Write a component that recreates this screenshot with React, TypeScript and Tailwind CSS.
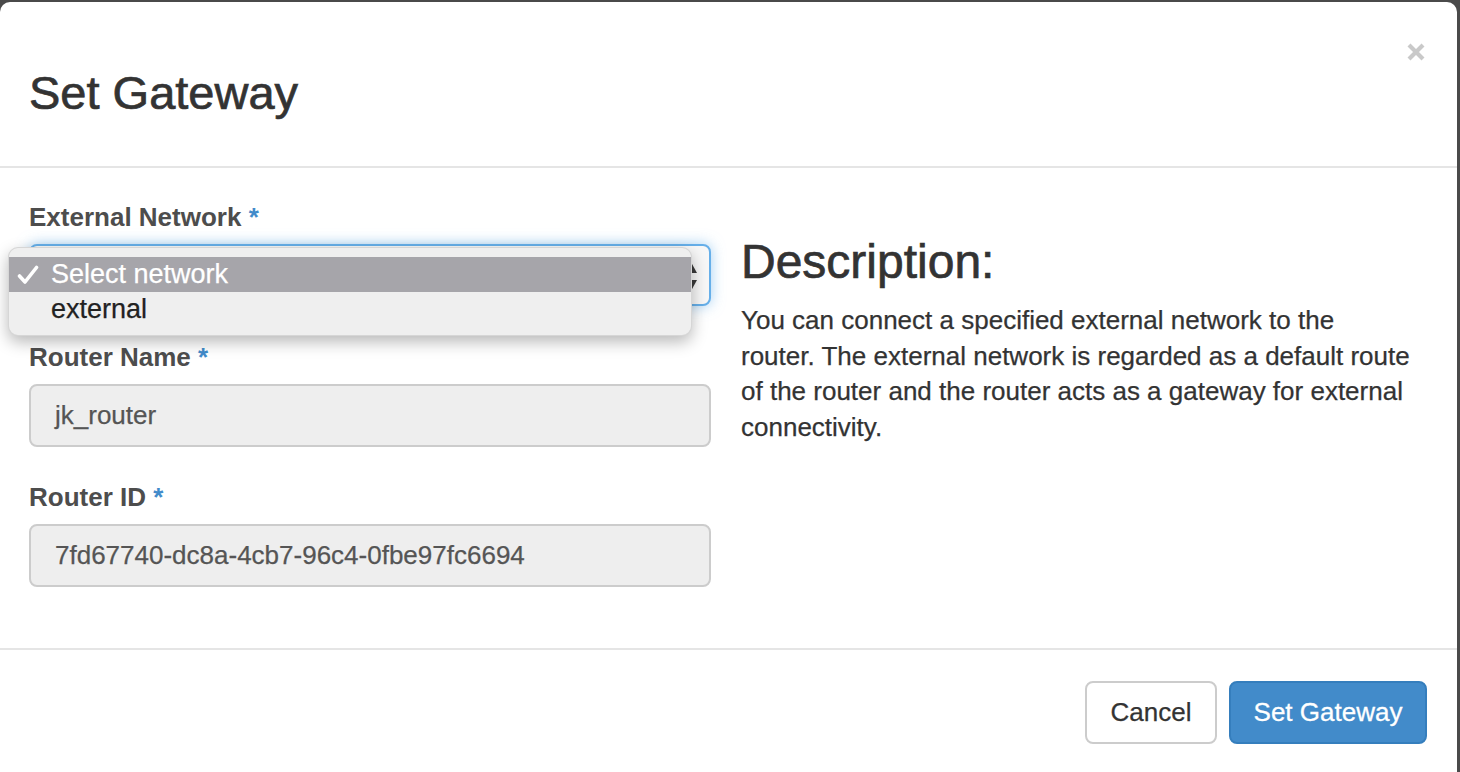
import React from 'react';

const Req = () => <span className="text-[#428bca]"> *</span>;

export default function App() {
  return (
    <div className="w-[1460px] h-[772px] overflow-hidden bg-[#4a4a4a] pt-[2px] pr-[3px]">
      <div className="h-[780px] rounded-[10px] bg-white flex flex-col font-['Liberation_Sans',Arial,sans-serif]">
        {/* Header */}
        <div className="relative h-[166px] shrink-0 border-b-2 border-[#e5e5e5] pl-[29px] pt-[67px]">
          <h3 className="text-[47px] leading-[48px] text-[#333] [-webkit-text-stroke:0.7px_#333]">Set Gateway</h3>
          <button className="absolute right-[32px] top-[41px] w-[18px] h-[18px]">
            <svg width="18" height="18" viewBox="0 0 18 18">
              <path d="M2 2L16 16M16 2L2 16" stroke="#c9c9c9" strokeWidth="4.2" />
            </svg>
          </button>
        </div>

        {/* Body */}
        <div className="h-[480px] shrink-0 flex px-[29px] pt-[31px]">
          <div className="w-[682px] shrink-0">
            <div className="mb-[33px]">
              <label className="block text-[26px] leading-[37px] font-bold text-[#4d4d4d] mb-[8px]">
                External Network<Req />
              </label>
              <div className="relative h-[62px] rounded-[8px] border-2 border-[#66afe9] bg-[#f7f7f7] shadow-[0_0_14px_rgba(102,175,233,0.6)]">
                <svg className="absolute right-[12px] top-[17px]" width="11" height="27" viewBox="0 0 11 27">
                  <path d="M5.5 0L11 10H0Z" fill="#3a3a3a" />
                  <path d="M0 17H11L5.5 27Z" fill="#3a3a3a" />
                </svg>
                {/* open dropdown list */}
                <div className="absolute left-[-23px] top-[1px] w-[684px] rounded-[10px] bg-[#efefef] border border-black/10 shadow-[0_6px_16px_rgba(0,0,0,0.28)] py-[9px] text-[27px] [-webkit-text-stroke:0.25px]">
                  <div className="relative h-[35px] leading-[35px] bg-[#a6a5aa] text-white pl-[42px]">
                    <svg className="absolute left-[8px] top-[8px]" width="22" height="20" viewBox="0 0 22 20">
                      <path d="M2.5 11L8 17L19.5 2.5" fill="none" stroke="#fff" strokeWidth="3.6" strokeLinecap="round" strokeLinejoin="round" />
                    </svg>
                    Select network
                  </div>
                  <div className="h-[34px] leading-[34px] text-[#222] pl-[42px]">external</div>
                </div>
              </div>
            </div>

            <div className="mb-[32px]">
              <label className="block text-[26px] leading-[37px] font-bold text-[#4d4d4d] mb-[8px]">
                Router Name<Req />
              </label>
              <div className="h-[63px] rounded-[8px] border-2 border-[#cccccc] bg-[#eeeeee] px-[24px] flex items-center text-[26px] text-[#555] [-webkit-text-stroke:0.25px_#555]">
                jk_router
              </div>
            </div>

            <div>
              <label className="block text-[26px] leading-[37px] font-bold text-[#4d4d4d] mb-[8px]">
                Router ID<Req />
              </label>
              <div className="h-[63px] rounded-[8px] border-2 border-[#cccccc] bg-[#eeeeee] px-[24px] flex items-center text-[26px] text-[#555] [-webkit-text-stroke:0.25px_#555]">
                7fd67740-dc8a-4cb7-96c4-0fbe97fc6694
              </div>
            </div>
          </div>

          <div className="ml-[30px] w-[686px] shrink-0">
            <h3 className="mt-[37px] text-[48px] leading-[52px] text-[#333] [-webkit-text-stroke:0.7px_#333]">Description:</h3>
            <p className="mt-[15px] text-[26px] leading-[35.7px] text-[#333] [-webkit-text-stroke:0.25px_#333]">
              You can connect a specified external network to the
              <br />
              router. The external network is regarded as a default route
              <br />
              of the router and the router acts as a gateway for external
              <br />
              connectivity.
            </p>
          </div>
        </div>

        {/* Footer */}
        <div className="border-t-2 border-[#e5e5e5] flex justify-end gap-[12px] pt-[31px] pr-[30px]">
          <button className="w-[132px] h-[63px] rounded-[8px] border-2 border-[#cccccc] bg-white text-[26px] text-[#333] [-webkit-text-stroke:0.25px_#333]">
            Cancel
          </button>
          <button className="w-[198px] h-[63px] rounded-[8px] border-2 border-[#357ebd] bg-[#428bca] text-[26px] text-white [-webkit-text-stroke:0.3px_#fff]">
            Set Gateway
          </button>
        </div>
      </div>
    </div>
  );
}
